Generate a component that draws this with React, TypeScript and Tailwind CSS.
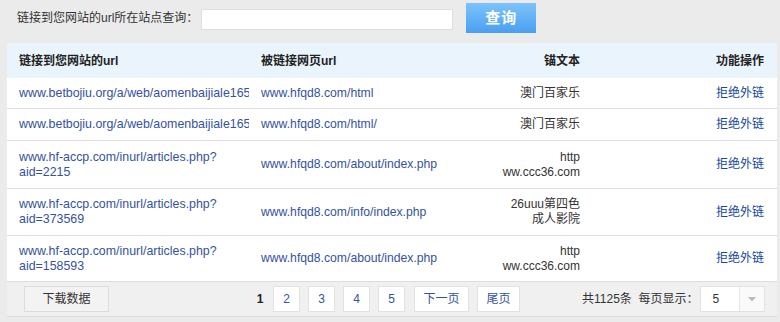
import React from "react";

const font = { fontFamily: '"Liberation Sans", Arial, "Noto Sans CJK SC", sans-serif' };

type Row = { src: string[]; target: string; anchor: string[]; h: string };

const rows: Row[] = [
  { src: ["www.betbojiu.org/a/web/aomenbaijiale165.html"], target: "www.hfqd8.com/html", anchor: ["澳门百家乐"], h: "h-[31px]" },
  { src: ["www.betbojiu.org/a/web/aomenbaijiale165.html"], target: "www.hfqd8.com/html/", anchor: ["澳门百家乐"], h: "h-[32px]" },
  { src: ["www.hf-accp.com/inurl/articles.php?", "aid=2215"], target: "www.hfqd8.com/about/index.php", anchor: ["http", "ww.ccc36.com"], h: "h-[48px]" },
  { src: ["www.hf-accp.com/inurl/articles.php?", "aid=373569"], target: "www.hfqd8.com/info/index.php", anchor: ["26uuu第四色", "成人影院"], h: "h-[47px]" },
  { src: ["www.hf-accp.com/inurl/articles.php?", "aid=158593"], target: "www.hfqd8.com/about/index.php", anchor: ["http", "ww.ccc36.com"], h: "h-[46px]" },
];

export default function App() {
  return (
    <div className="w-[780px] h-[322px] bg-[#ebebeb] overflow-hidden text-[12px] text-[#333]" style={font}>
      {/* search bar */}
      <div className="h-[43px] flex items-start">
        <div className="ml-[17px] mt-[11px] leading-[15px]">链接到您网站的url所在站点查询：</div>
        <input className="ml-[3px] mt-[9px] w-[252px] h-[21px] bg-white border border-[#dedede] outline-none" />
        <button className="ml-[13px] mt-[3px] w-[70px] h-[30px] bg-gradient-to-b from-[#7cc3fa] to-[#4a9ff0] text-white font-bold text-[15px] tracking-[1px]">
          查询
        </button>
      </div>

      <div className="ml-[7px] w-[770px]">
        {/* header */}
        <div className="h-[35px] bg-[#eaf4fd] flex items-center font-bold text-[#222]">
          <div className="w-[244px] pl-[12px]">链接到您网站的url</div>
          <div className="w-[245px] pl-[10px]">被链接网页url</div>
          <div className="w-[84px] text-right">锚文本</div>
          <div className="flex-1 text-right pr-[13px]">功能操作</div>
        </div>

        {/* rows */}
        <div className="bg-white">
          {rows.map((r, i) => (
            <div key={i} className={`flex items-center border-b border-[#dddddd] leading-[15px] ${r.h}`}>
              <div className="w-[242px] shrink-0 mr-[2px] pl-[12px] text-[#34529f] text-[12.4px] overflow-hidden whitespace-nowrap">
                {r.src.map((s, j) => (
                  <div key={j} className="overflow-hidden">{s}</div>
                ))}
              </div>
              <div className="w-[245px] shrink-0 pl-[10px] text-[#34529f] text-[12.2px] whitespace-nowrap">{r.target}</div>
              <div className="w-[84px] shrink-0 text-right text-[#333] whitespace-nowrap">
                {r.anchor.map((s, j) => (
                  <div key={j}>{s}</div>
                ))}
              </div>
              <div className="flex-1 text-right pr-[13px] text-[#12479a]">拒绝外链</div>
            </div>
          ))}
        </div>

        {/* footer */}
        <div className="h-[35px] bg-[#f0f0f0] border-b border-[#dddddd] flex items-center">
          <div className="ml-[17px] w-[85px] h-[26px] bg-[#f3f3f3] border border-[#dcdcdc] flex items-center justify-center text-[#333]">
            下载数据
          </div>
          <div className="ml-[143px] w-[16px] text-center font-bold text-[#222]">1</div>
          <div className="ml-[5px] flex gap-[8px]">
            {["2", "3", "4", "5"].map((p) => (
              <div key={p} className="w-[27px] h-[26px] bg-white border border-[#e2e2e2] flex items-center justify-center text-[#34529f]">
                {p}
              </div>
            ))}
            <div className="ml-[1px] w-[55px] h-[26px] bg-white border border-[#e2e2e2] flex items-center justify-center text-[#34529f]">下一页</div>
            <div className="w-[43px] h-[26px] bg-white border border-[#e2e2e2] flex items-center justify-center text-[#34529f]">尾页</div>
          </div>
          <div className="ml-[62px] text-[#333] whitespace-nowrap">共1125条&nbsp; 每页显示：</div>
          <div className="ml-[2px] w-[65px] h-[26px] bg-white border border-[#e2e2e2] flex">
            <div className="flex-1 pl-[11px] flex items-center text-[#333]">5</div>
            <div className="w-[25px] border-l border-[#e6e6e6] bg-[#fafafa] flex items-center justify-center">
              <svg width="8" height="5" viewBox="0 0 8 5">
                <path d="M0 0 L8 0 L4 4.5 Z" fill="#bbbbbb" />
              </svg>
            </div>
          </div>
        </div>
      </div>
    </div>
  );
}
